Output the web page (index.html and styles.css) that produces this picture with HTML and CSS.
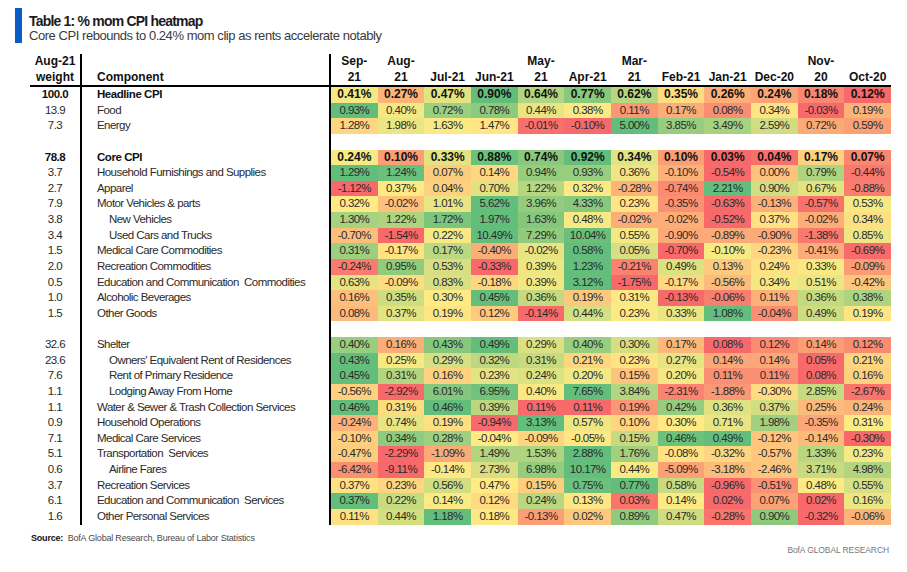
FILE: index.html
```html
<!DOCTYPE html>
<html lang="en">
<head>
<meta charset="utf-8">
<title>Table 1: % mom CPI heatmap</title>
<link rel="stylesheet" href="styles.css">
</head>
<body>
<div class="page">
  <header class="caption">
    <h1 class="title">Table 1: % mom CPI heatmap</h1>
    <p class="subtitle">Core CPI rebounds to 0.24% mom clip as rents accelerate notably</p>
  </header>

  <div class="heatmap">
    <div class="row head">
      <div class="w"><span>Aug-21</span><span>weight</span></div>
      <div class="c"><span>Component</span></div>
      <div class="m"><span>Sep-</span><span>21</span></div>
      <div class="m"><span>Aug-</span><span>21</span></div>
      <div class="m"><span>Jul-21</span></div>
      <div class="m"><span>Jun-21</span></div>
      <div class="m"><span>May-</span><span>21</span></div>
      <div class="m"><span>Apr-21</span></div>
      <div class="m"><span>Mar-</span><span>21</span></div>
      <div class="m"><span>Feb-21</span></div>
      <div class="m"><span>Jan-21</span></div>
      <div class="m"><span>Dec-20</span></div>
      <div class="m"><span>Nov-</span><span>20</span></div>
      <div class="m"><span>Oct-20</span></div>
    </div>

    <div class="row data strong">
      <div class="w">100.0</div><div class="c">Headline CPI</div>
      <div class="v">0.41%</div><div class="v">0.27%</div><div class="v">0.47%</div><div class="v">0.90%</div><div class="v">0.64%</div><div class="v">0.77%</div><div class="v">0.62%</div><div class="v">0.35%</div><div class="v">0.26%</div><div class="v">0.24%</div><div class="v">0.18%</div><div class="v">0.12%</div>
    </div>
    <div class="row data">
      <div class="w">13.9</div><div class="c">Food</div>
      <div class="v">0.93%</div><div class="v">0.40%</div><div class="v">0.72%</div><div class="v">0.78%</div><div class="v">0.44%</div><div class="v">0.38%</div><div class="v">0.11%</div><div class="v">0.17%</div><div class="v">0.08%</div><div class="v">0.34%</div><div class="v">-0.03%</div><div class="v">0.19%</div>
    </div>
    <div class="row data">
      <div class="w">7.3</div><div class="c">Energy</div>
      <div class="v">1.28%</div><div class="v">1.98%</div><div class="v">1.63%</div><div class="v">1.47%</div><div class="v">-0.01%</div><div class="v">-0.10%</div><div class="v">5.00%</div><div class="v">3.85%</div><div class="v">3.49%</div><div class="v">2.59%</div><div class="v">0.72%</div><div class="v">0.59%</div>
    </div>
    <div class="row spacer"><div class="w"></div><div class="c"></div></div>
    <div class="row data strong">
      <div class="w">78.8</div><div class="c">Core CPI</div>
      <div class="v">0.24%</div><div class="v">0.10%</div><div class="v">0.33%</div><div class="v">0.88%</div><div class="v">0.74%</div><div class="v">0.92%</div><div class="v">0.34%</div><div class="v">0.10%</div><div class="v">0.03%</div><div class="v">0.04%</div><div class="v">0.17%</div><div class="v">0.07%</div>
    </div>
    <div class="row data">
      <div class="w">3.7</div><div class="c">Household Furnishings and Supplies</div>
      <div class="v">1.29%</div><div class="v">1.24%</div><div class="v">0.07%</div><div class="v">0.14%</div><div class="v">0.94%</div><div class="v">0.93%</div><div class="v">0.36%</div><div class="v">-0.10%</div><div class="v">-0.54%</div><div class="v">0.00%</div><div class="v">0.79%</div><div class="v">-0.44%</div>
    </div>
    <div class="row data">
      <div class="w">2.7</div><div class="c">Apparel</div>
      <div class="v">-1.12%</div><div class="v">0.37%</div><div class="v">0.04%</div><div class="v">0.70%</div><div class="v">1.22%</div><div class="v">0.32%</div><div class="v">-0.28%</div><div class="v">-0.74%</div><div class="v">2.21%</div><div class="v">0.90%</div><div class="v">0.67%</div><div class="v">-0.88%</div>
    </div>
    <div class="row data">
      <div class="w">7.9</div><div class="c">Motor Vehicles &amp; parts</div>
      <div class="v">0.32%</div><div class="v">-0.02%</div><div class="v">1.01%</div><div class="v">5.62%</div><div class="v">3.96%</div><div class="v">4.33%</div><div class="v">0.23%</div><div class="v">-0.35%</div><div class="v">-0.63%</div><div class="v">-0.13%</div><div class="v">-0.57%</div><div class="v">0.53%</div>
    </div>
    <div class="row data sub">
      <div class="w">3.8</div><div class="c">New Vehicles</div>
      <div class="v">1.30%</div><div class="v">1.22%</div><div class="v">1.72%</div><div class="v">1.97%</div><div class="v">1.63%</div><div class="v">0.48%</div><div class="v">-0.02%</div><div class="v">-0.02%</div><div class="v">-0.52%</div><div class="v">0.37%</div><div class="v">-0.02%</div><div class="v">0.34%</div>
    </div>
    <div class="row data sub">
      <div class="w">3.4</div><div class="c">Used Cars and Trucks</div>
      <div class="v">-0.70%</div><div class="v">-1.54%</div><div class="v">0.22%</div><div class="v">10.49%</div><div class="v">7.29%</div><div class="v">10.04%</div><div class="v">0.55%</div><div class="v">-0.90%</div><div class="v">-0.89%</div><div class="v">-0.90%</div><div class="v">-1.38%</div><div class="v">0.85%</div>
    </div>
    <div class="row data">
      <div class="w">1.5</div><div class="c">Medical Care Commodities</div>
      <div class="v">0.31%</div><div class="v">-0.17%</div><div class="v">0.17%</div><div class="v">-0.40%</div><div class="v">-0.02%</div><div class="v">0.58%</div><div class="v">0.05%</div><div class="v">-0.70%</div><div class="v">-0.10%</div><div class="v">-0.23%</div><div class="v">-0.41%</div><div class="v">-0.69%</div>
    </div>
    <div class="row data">
      <div class="w">2.0</div><div class="c">Recreation Commodities</div>
      <div class="v">-0.24%</div><div class="v">0.95%</div><div class="v">0.53%</div><div class="v">-0.33%</div><div class="v">0.39%</div><div class="v">1.23%</div><div class="v">-0.21%</div><div class="v">0.49%</div><div class="v">0.13%</div><div class="v">0.24%</div><div class="v">0.33%</div><div class="v">-0.09%</div>
    </div>
    <div class="row data">
      <div class="w">0.5</div><div class="c">Education and Communication&nbsp; Commodities</div>
      <div class="v">0.63%</div><div class="v">-0.09%</div><div class="v">0.83%</div><div class="v">-0.18%</div><div class="v">0.39%</div><div class="v">3.12%</div><div class="v">-1.75%</div><div class="v">-0.17%</div><div class="v">-0.56%</div><div class="v">0.34%</div><div class="v">0.51%</div><div class="v">-0.42%</div>
    </div>
    <div class="row data">
      <div class="w">1.0</div><div class="c">Alcoholic Beverages</div>
      <div class="v">0.16%</div><div class="v">0.35%</div><div class="v">0.30%</div><div class="v">0.45%</div><div class="v">0.36%</div><div class="v">0.19%</div><div class="v">0.31%</div><div class="v">-0.13%</div><div class="v">-0.06%</div><div class="v">0.11%</div><div class="v">0.36%</div><div class="v">0.38%</div>
    </div>
    <div class="row data">
      <div class="w">1.5</div><div class="c">Other Goods</div>
      <div class="v">0.08%</div><div class="v">0.37%</div><div class="v">0.19%</div><div class="v">0.12%</div><div class="v">-0.14%</div><div class="v">0.44%</div><div class="v">0.23%</div><div class="v">0.33%</div><div class="v">1.08%</div><div class="v">-0.04%</div><div class="v">0.49%</div><div class="v">0.19%</div>
    </div>
    <div class="row spacer"><div class="w"></div><div class="c"></div></div>
    <div class="row data">
      <div class="w">32.6</div><div class="c">Shelter</div>
      <div class="v">0.40%</div><div class="v">0.16%</div><div class="v">0.43%</div><div class="v">0.49%</div><div class="v">0.29%</div><div class="v">0.40%</div><div class="v">0.30%</div><div class="v">0.17%</div><div class="v">0.08%</div><div class="v">0.12%</div><div class="v">0.14%</div><div class="v">0.12%</div>
    </div>
    <div class="row data sub">
      <div class="w">23.6</div><div class="c">Owners' Equivalent Rent of Residences</div>
      <div class="v">0.43%</div><div class="v">0.25%</div><div class="v">0.29%</div><div class="v">0.32%</div><div class="v">0.31%</div><div class="v">0.21%</div><div class="v">0.23%</div><div class="v">0.27%</div><div class="v">0.14%</div><div class="v">0.14%</div><div class="v">0.05%</div><div class="v">0.21%</div>
    </div>
    <div class="row data sub">
      <div class="w">7.6</div><div class="c">Rent of Primary Residence</div>
      <div class="v">0.45%</div><div class="v">0.31%</div><div class="v">0.16%</div><div class="v">0.23%</div><div class="v">0.24%</div><div class="v">0.20%</div><div class="v">0.15%</div><div class="v">0.20%</div><div class="v">0.11%</div><div class="v">0.11%</div><div class="v">0.08%</div><div class="v">0.16%</div>
    </div>
    <div class="row data sub">
      <div class="w">1.1</div><div class="c">Lodging Away From Home</div>
      <div class="v">-0.56%</div><div class="v">-2.92%</div><div class="v">6.01%</div><div class="v">6.95%</div><div class="v">0.40%</div><div class="v">7.65%</div><div class="v">3.84%</div><div class="v">-2.31%</div><div class="v">-1.88%</div><div class="v">-0.30%</div><div class="v">2.85%</div><div class="v">-2.67%</div>
    </div>
    <div class="row data">
      <div class="w">1.1</div><div class="c">Water &amp; Sewer &amp; Trash Collection Services</div>
      <div class="v">0.46%</div><div class="v">0.31%</div><div class="v">0.46%</div><div class="v">0.39%</div><div class="v">0.11%</div><div class="v">0.11%</div><div class="v">0.19%</div><div class="v">0.42%</div><div class="v">0.36%</div><div class="v">0.37%</div><div class="v">0.25%</div><div class="v">0.24%</div>
    </div>
    <div class="row data">
      <div class="w">0.9</div><div class="c">Household Operations</div>
      <div class="v">-0.24%</div><div class="v">0.74%</div><div class="v">0.19%</div><div class="v">-0.94%</div><div class="v">3.13%</div><div class="v">0.57%</div><div class="v">0.10%</div><div class="v">0.30%</div><div class="v">0.71%</div><div class="v">1.98%</div><div class="v">-0.35%</div><div class="v">0.31%</div>
    </div>
    <div class="row data">
      <div class="w">7.1</div><div class="c">Medical Care Services</div>
      <div class="v">-0.10%</div><div class="v">0.34%</div><div class="v">0.28%</div><div class="v">-0.04%</div><div class="v">-0.09%</div><div class="v">-0.05%</div><div class="v">0.15%</div><div class="v">0.46%</div><div class="v">0.49%</div><div class="v">-0.12%</div><div class="v">-0.14%</div><div class="v">-0.30%</div>
    </div>
    <div class="row data">
      <div class="w">5.1</div><div class="c">Transportation&nbsp; Services</div>
      <div class="v">-0.47%</div><div class="v">-2.29%</div><div class="v">-1.09%</div><div class="v">1.49%</div><div class="v">1.53%</div><div class="v">2.88%</div><div class="v">1.76%</div><div class="v">-0.08%</div><div class="v">-0.32%</div><div class="v">-0.57%</div><div class="v">1.33%</div><div class="v">0.23%</div>
    </div>
    <div class="row data sub">
      <div class="w">0.6</div><div class="c">Airline Fares</div>
      <div class="v">-6.42%</div><div class="v">-9.11%</div><div class="v">-0.14%</div><div class="v">2.73%</div><div class="v">6.98%</div><div class="v">10.17%</div><div class="v">0.44%</div><div class="v">-5.09%</div><div class="v">-3.18%</div><div class="v">-2.46%</div><div class="v">3.71%</div><div class="v">4.98%</div>
    </div>
    <div class="row data">
      <div class="w">3.7</div><div class="c">Recreation Services</div>
      <div class="v">0.37%</div><div class="v">0.23%</div><div class="v">0.56%</div><div class="v">0.47%</div><div class="v">0.15%</div><div class="v">0.75%</div><div class="v">0.77%</div><div class="v">0.58%</div><div class="v">-0.96%</div><div class="v">-0.51%</div><div class="v">0.48%</div><div class="v">0.55%</div>
    </div>
    <div class="row data">
      <div class="w">6.1</div><div class="c">Education and Communication&nbsp; Services</div>
      <div class="v">0.37%</div><div class="v">0.22%</div><div class="v">0.14%</div><div class="v">0.12%</div><div class="v">0.24%</div><div class="v">0.13%</div><div class="v">0.03%</div><div class="v">0.14%</div><div class="v">0.02%</div><div class="v">0.07%</div><div class="v">0.02%</div><div class="v">0.16%</div>
    </div>
    <div class="row data">
      <div class="w">1.6</div><div class="c">Other Personal Services</div>
      <div class="v">0.11%</div><div class="v">0.44%</div><div class="v">1.18%</div><div class="v">0.18%</div><div class="v">-0.13%</div><div class="v">0.02%</div><div class="v">0.89%</div><div class="v">0.47%</div><div class="v">-0.28%</div><div class="v">0.90%</div><div class="v">-0.32%</div><div class="v">-0.06%</div>
    </div>
  </div>

  <footer class="foot">
    <p class="source"><b>Source:</b>&nbsp; BofA Global Research, Bureau of Labor Statistics</p>
    <p class="brand">BofA GLOBAL RESEARCH</p>
  </footer>
</div>
<script src="script.js"></script>
</body>
</html>
```

FILE: styles.css
```css
* { box-sizing: border-box; }

:root {
  --sans: "Liberation Sans", Arial, sans-serif;
}

body {
  margin: 0;
  background: #ffffff;
  color: #222;
  font-family: var(--sans);
}

.page {
  padding: 8px 0 0 15px;
}

.caption {
  border-left: 7px solid #0b5bc6;
  padding: 5px 0 0 7px;
  height: 35px;
}

.title {
  margin: 0;
  font: bold 14px/16px var(--sans);
  letter-spacing: -0.8px;
  color: #1b1b1b;
}

.subtitle {
  margin: 0;
  font: 13px/14px var(--sans);
  letter-spacing: -0.45px;
  color: #3a3a3a;
}

.heatmap {
  margin: 11px 0 0 15px;
  width: 861px;
}

.row {
  display: grid;
  grid-template-columns: 52px 249px repeat(12, 1fr);
  height: 15.63px;
  font: 11.5px/15.63px var(--sans);
  letter-spacing: -0.55px;
  color: #2a2a2a;
}

.row .w {
  border-right: 2px solid #000;
  text-align: center;
}

.row .c {
  border-right: 2px solid #000;
  padding-left: 15px;
  white-space: nowrap;
}

.row.sub .c {
  padding-left: 27px;
}

.row .v {
  text-align: center;
  white-space: nowrap;
}

.row.strong {
  color: #111;
}

.row.strong .w,
.row.strong .c {
  font-weight: bold;
  letter-spacing: -0.45px;
}

.row.strong .v {
  font: bold 12px/15.63px var(--sans);
  letter-spacing: 0;
}

.row.head {
  height: 33px;
  border-bottom: 2px solid #000;
  font: bold 12px/15.5px var(--sans);
  letter-spacing: 0;
  color: #111;
}

.row.head > div {
  display: flex;
  flex-direction: column;
  justify-content: flex-end;
}

.row.head .m {
  align-items: center;
}

.foot {
  margin-left: 15px;
  width: 861px;
  padding-top: 7px;
}

.source {
  margin: 0 0 0 1px;
  font: 9px/12px var(--sans);
  letter-spacing: -0.2px;
  color: #4a4a4a;
}

.source b {
  color: #111;
}

.brand {
  margin: 0;
  padding-right: 2px;
  text-align: right;
  font: 8.5px/12px var(--sans);
  letter-spacing: -0.1px;
  color: #777;
}
```

FILE: script.js
```js
(function () {
  var RED = [248, 105, 107];
  var YELLOW = [255, 235, 132];
  var GREEN = [99, 190, 123];

  function mix(a, b, t) {
    t = Math.max(0, Math.min(1, t));
    return 'rgb(' + a.map(function (c, i) {
      return Math.round(c + (b[i] - c) * t);
    }).join(',') + ')';
  }

  function percentile(sorted, p) {
    var pos = (sorted.length - 1) * p;
    var lo = Math.floor(pos);
    var hi = Math.min(lo + 1, sorted.length - 1);
    return sorted[lo] + (sorted[hi] - sorted[lo]) * (pos - lo);
  }

  document.querySelectorAll('.row.data').forEach(function (row) {
    var cells = Array.prototype.slice.call(row.querySelectorAll('.v'));
    var vals = cells.map(function (c) { return parseFloat(c.textContent); });
    var sorted = vals.slice().sort(function (a, b) { return a - b; });
    var min = sorted[0];
    var max = sorted[sorted.length - 1];
    var mid = percentile(sorted, 0.5);
    cells.forEach(function (cell, i) {
      var v = vals[i];
      var color;
      if (v <= mid) {
        color = mix(RED, YELLOW, mid === min ? 1 : (v - min) / (mid - min));
      } else {
        color = mix(YELLOW, GREEN, max === mid ? 0 : (v - mid) / (max - mid));
      }
      cell.style.backgroundColor = color;
    });
  });
})();
```
